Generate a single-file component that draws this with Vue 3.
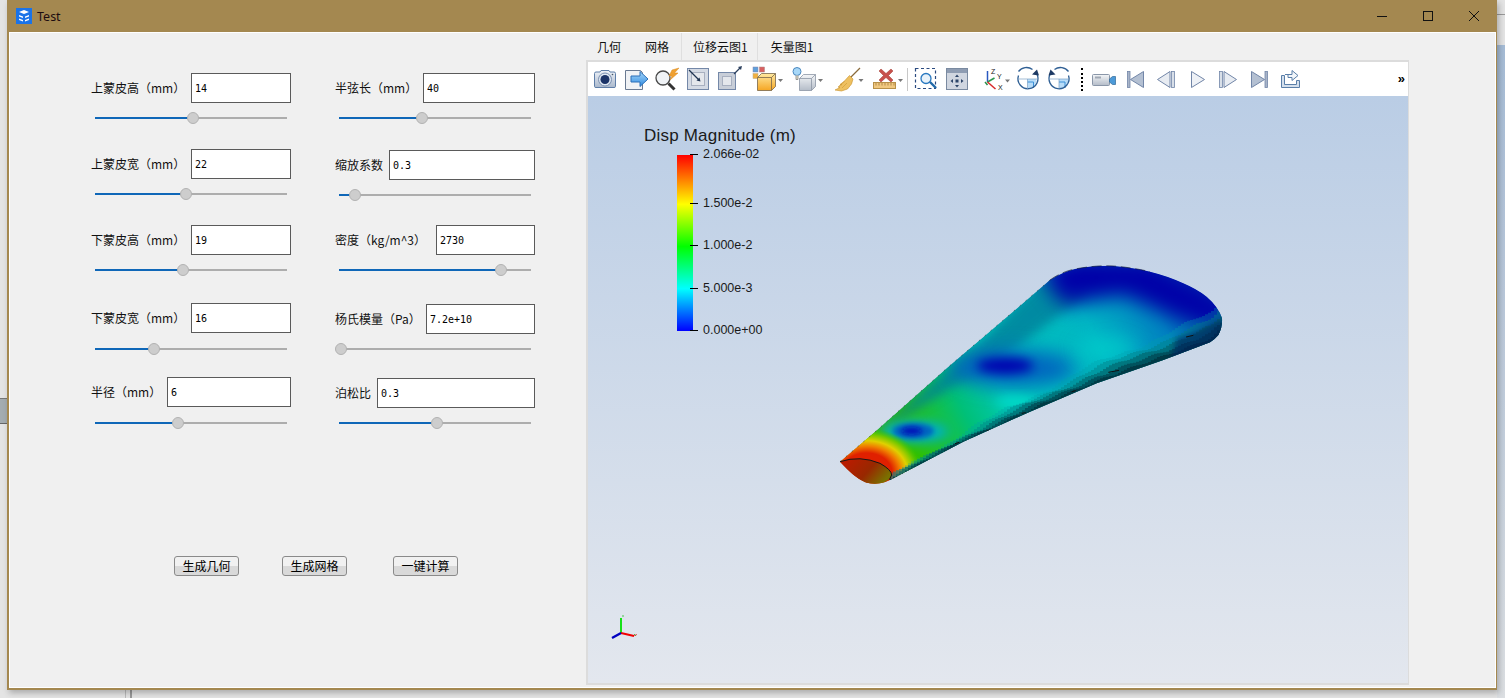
<template>
  <div class="desktop">
    <div class="behind-left"></div>
    <div class="behind-right"></div>
    <div class="behind-line"></div>
    <div class="behind-bottom"></div>
    <div class="window">
      <div class="titlebar">
        <svg class="app-icon" width="16" height="16" viewBox="0 0 16 16">
          <rect width="16" height="16" fill="#1a73e8" />
          <path d="M3 4l5-2 5 2-5 2zM3 7l4 1.500v1.600L3 8.500zM3 10.500l4 1.500v1.600l-4-1.600zM9 8.500l4-1.500v1.500l-4 1.600zM9 12l4-1.500V12l-4 1.600z" fill="#fff" />
        </svg>
        <span class="title-text">Test</span>
        <div class="controls">
          <svg width="12" height="12" viewBox="0 0 12 12"><path d="M1 6.500h10" stroke="#111" fill="none" /></svg>
          <svg width="12" height="12" viewBox="0 0 12 12"><rect x="1.500" y="1.500" width="9" height="9" stroke="#111" fill="none" /></svg>
          <svg width="12" height="12" viewBox="0 0 12 12"><path d="M1 1l10 10M11 1L1 11" stroke="#111" fill="none" /></svg>
        </div>
      </div>

      <div class="client">
        <div class="form">
          <div class="columns">
            <div v-for="(col, c) in columns" :key="c" class="column">
              <div v-for="f in col" :key="f.label" class="field" :style="{ marginTop: f.gap + 'px' }">
                <div class="row">
                  <label>{{ f.label }}</label>
                  <input type="text" :value="f.value" readonly :style="{ width: f.width + 'px' }" />
                </div>
                <div class="slider" :style="{ marginTop: (f.sliderGap || 9) + 'px' }">
                  <div class="track"></div>
                  <div class="fill" :style="{ width: f.pos + 'px' }"></div>
                  <div class="thumb" :style="{ left: f.pos - 6 + 'px' }"></div>
                </div>
              </div>
            </div>
          </div>
          <div class="actions">
            <button class="b1">生成几何</button>
            <button class="b2">生成网格</button>
            <button class="b3">一键计算</button>
          </div>
        </div>

        <div class="right">
          <div class="tabs">
            <span class="tab t1">几何</span>
            <span class="tab t2">网格</span>
            <span class="tab t3">位移云图1</span>
            <span class="tab t4">矢量图1</span>
          </div>
          <div class="viewer">
            <div class="toolbar">
              <svg class="defs" width="0" height="0">
                <defs>
                  <linearGradient id="gBox" x1="0" y1="0" x2="0" y2="1"><stop offset="0" stop-color="#eef2f8" /><stop offset="1" stop-color="#aab8cc" /></linearGradient>
                  <linearGradient id="gBlue" x1="0" y1="0" x2="0" y2="1"><stop offset="0" stop-color="#a8d8fa" /><stop offset="1" stop-color="#2f8ae0" /></linearGradient>
                  <linearGradient id="gOrange" x1="0" y1="0" x2="0" y2="1"><stop offset="0" stop-color="#ffe9a0" /><stop offset="1" stop-color="#f5a623" /></linearGradient>
                  <linearGradient id="gGrey" x1="0" y1="0" x2="0" y2="1"><stop offset="0" stop-color="#f4f6f8" /><stop offset="1" stop-color="#b4bcc8" /></linearGradient>
                </defs>
              </svg>
              <!-- camera -->
              <svg width="31" height="35">
                <path d="M4.500 12.500q0-1.500 1.500-1.500h4l1-1.500h8l1 1.500h4q1.500 0 1.500 1.500v13q0 1-1.500 1H6q-1.500 0-1.500-1z" fill="url(#gBox)" stroke="#5f7ea8" />
                <circle cx="15" cy="18.500" r="6.500" fill="#dfe8f2" stroke="#7a8fb0" />
                <circle cx="15" cy="18.500" r="4.500" fill="#1c3468" />
                <circle cx="22.500" cy="13.500" r="0.800" fill="#456" />
              </svg>
              <!-- save data -->
              <svg width="31" height="35">
                <path d="M4.500 9.500h15l2 2v17h-17z" fill="#f0f2f5" stroke="#6a7a92" />
                <path d="M10 15h9v-4.500l8 7.500-8 7.500V21h-9z" fill="url(#gBlue)" stroke="#2b6fb8" />
              </svg>
              <!-- magnifier with spark -->
              <svg width="30" height="35">
                <circle cx="11" cy="17" r="7" fill="#f0f3f6" stroke="#484848" stroke-width="1.300" />
                <path d="M16.500 22.500l6 6" stroke="#333" stroke-width="3" />
                <path d="M27 7l-7 2-3 6h3l-2 4 8-7h-3.500z" fill="#f0a030" stroke="#d88a20" stroke-width="0.500" />
              </svg>
              <!-- reset box -->
              <svg width="31" height="35">
                <rect x="5.500" y="7.500" width="21" height="21" fill="#d4dae4" stroke="#7488a8" />
                <rect x="9.500" y="11.500" width="13" height="13" fill="#e4e7ec" stroke="#a8b0c0" />
                <path d="M7 9l10 10" stroke="#1e3350" stroke-width="1.200" />
                <path d="M18.500 20.500l-4-1 3-3z" fill="#1e3350" />
              </svg>
              <!-- outward box -->
              <svg width="31" height="35">
                <rect x="5.500" y="11.500" width="17" height="17" fill="#c8ced8" stroke="#7488a8" />
                <rect x="9.500" y="15.500" width="9" height="9" fill="#e4e7ec" stroke="#a8b0c0" />
                <path d="M21 13l6-6" stroke="#2c405e" stroke-width="1.200" />
                <path d="M29 5l-1 4-3-3z" fill="#2c405e" />
              </svg>
              <!-- coloured cube -->
              <svg width="40" height="35">
                <rect x="9" y="6" width="5" height="5" fill="#5fa0dc" stroke="#88a" stroke-width="0.500" />
                <rect x="15.500" y="6" width="5" height="5" fill="#d86060" stroke="#a88" stroke-width="0.500" />
                <rect x="9" y="12.500" width="5" height="5" fill="#f0b040" stroke="#ba8" stroke-width="0.500" />
                <path d="M13.500 16.500l4-4h14v13l-4 4h-14z" fill="url(#gOrange)" stroke="#77664a" stroke-width="0.800" />
                <path d="M13.500 16.500h14v13M27.500 16.500l4-4" fill="none" stroke="#77664a" stroke-width="0.800" />
                <path d="M34 18h5l-2.500 3z" fill="#777" />
              </svg>
              <!-- light and cube -->
              <svg width="40" height="35">
                <circle cx="13" cy="10.500" r="4" fill="#a8d8f8" stroke="#4a88c0" />
                <path d="M12 14.500v4h2v-4" fill="#e8e4d0" stroke="#777" stroke-width="0.700" />
                <path d="M15.500 17.500l4-4h12v12l-4 4h-12z" fill="url(#gGrey)" stroke="#8c96a4" stroke-width="0.800" />
                <path d="M15.500 17.500h12v12M27.500 17.500l4-4" fill="none" stroke="#8c96a4" stroke-width="0.800" />
                <path d="M34 18h5l-2.500 3z" fill="#777" />
              </svg>
              <!-- broom -->
              <svg width="40" height="35">
                <path d="M36 7L26 17" stroke="#8a6a3a" stroke-width="1.300" />
                <path d="M25.500 14.500l3.500 3.500-1.500 5-4 5-6 2-6.500-1 5-2.500-2-.5 4-2.500-2 0 4-3z" fill="#eec060" stroke="#c89028" stroke-width="0.600" />
                <path d="M18 27l5-5M15 25l6-5" stroke="#c89028" stroke-width="0.500" />
                <path d="M34.500 18h5l-2.500 3z" fill="#777" />
              </svg>
              <!-- clear with ruler -->
              <svg width="40" height="35">
                <path d="M17 8l5 4.500L27 8l2 2-4.500 4.500L29 19l-2 2-5-4.500L17 21l-2-2 4.500-4.500L15 10z" fill="#c8504c" stroke="#a03830" stroke-width="0.500" />
                <rect x="9.500" y="21.500" width="22" height="6" fill="#f0c880" stroke="#b89048" />
                <path d="M12 22v2.500M15 22v2.500M18 22v2.500M21 22v2.500M24 22v2.500M27 22v2.500M30 22v2.500" stroke="#9a7030" stroke-width="0.700" />
                <path d="M34 18h5l-2.500 3z" fill="#777" />
              </svg>
              <div class="sep"></div>
              <!-- zoom to box -->
              <svg width="30" height="35">
                <rect x="3.500" y="7.500" width="20" height="20" fill="none" stroke="#2a4a80" stroke-width="1.200" stroke-dasharray="3 2.500" />
                <circle cx="14" cy="17.500" r="5" fill="#e8f2fa" stroke="#2878c0" stroke-width="1.300" />
                <path d="M18 21l6 6" stroke="#2068a8" stroke-width="2.400" />
              </svg>
              <!-- interaction move -->
              <svg width="31" height="35">
                <rect x="4.500" y="7.500" width="21" height="21" fill="#d0d6e0" stroke="#7a8aa0" />
                <rect x="5" y="8" width="20" height="4" fill="#8e9cb2" />
                <path d="M15 13.500l2 2.500h-4zM15 26.500l2-2.500h-4zM8.500 20l2.500-2v4zM21.500 20l-2.500-2v4z" fill="#2c4468" />
                <rect x="13.500" y="18.500" width="3" height="3" fill="#2c4468" />
              </svg>
              <!-- axes -->
              <svg width="40" height="35">
                <path d="M14.500 21V10" stroke="#2a58c0" stroke-width="1.500" />
                <path d="M14.500 21l7-4" stroke="#2c9a50" stroke-width="1.500" />
                <path d="M14.500 21l8 7" stroke="#d82828" stroke-width="1.500" />
                <path d="M12 21l2.500 3" stroke="#28904a" stroke-width="1.500" />
                <text x="18" y="13" class="ax">Z</text>
                <text x="24" y="18" class="ax">Y</text>
                <text x="25" y="29" class="ax">X</text>
                <path d="M32 18.500h5l-2.500 3z" fill="#777" />
              </svg>
              <!-- rotate +90 -->
              <svg width="31" height="35">
                <path d="M14.500 18h9a9.500 9.500 0 0 1-9 10z" fill="#b8dcf8" />
                <path d="M14.500 21h6v6" fill="none" stroke="#3a90d8" stroke-width="1" />
                <path d="M23.500 12.500a10 10 0 1 1-18 2" fill="none" stroke="#2f5f94" stroke-width="1.300" />
                <path d="M5.500 10.500a10 10 0 0 1 14-2" fill="none" stroke="#2f5f94" stroke-width="1.300" />
                <path d="M4.500 18h20M14.500 18v10" stroke="#7da0c4" stroke-width="0.700" />
                <path d="M26 14.500l-7-1 5-5z" fill="#1e3a64" />
              </svg>
              <!-- rotate -90 -->
              <svg width="31" height="35">
                <path d="M15 18h9.500a9.500 9.500 0 0 1-9.500 10z" fill="#b8dcf8" />
                <path d="M15 21h6v6" fill="none" stroke="#3a90d8" stroke-width="1" />
                <path d="M6.500 12.500a10 10 0 1 0 18 2" fill="none" stroke="#2f5f94" stroke-width="1.300" />
                <path d="M24.500 10.500a10 10 0 0 0-14-2" fill="none" stroke="#2f5f94" stroke-width="1.300" />
                <path d="M5 18h20M15 18v10" stroke="#7da0c4" stroke-width="0.700" />
                <path d="M4.500 14.500l7-1-5-5z" fill="#1e3a64" />
              </svg>
              <div class="dots"></div>
              <!-- video -->
              <svg width="31" height="35">
                <rect x="3.500" y="13.500" width="17" height="11" rx="1" fill="url(#gGrey)" stroke="#8a96a8" />
                <rect x="6" y="15.500" width="6" height="2" fill="#a0a8b4" />
                <path d="M20.500 18l3-2.500h3v8h-3l-3-2.500z" fill="#4c9ad8" stroke="#306898" stroke-width="0.700" />
              </svg>
              <!-- first frame -->
              <svg width="31" height="35">
                <rect x="7.500" y="10.500" width="2.500" height="16" fill="#a8b4c8" stroke="#7286a8" stroke-width="0.800" />
                <path d="M23.500 10.500v16L10.500 18.500z" fill="#b4c0d2" stroke="#7286a8" />
              </svg>
              <!-- previous frame -->
              <svg width="31" height="35">
                <path d="M19 10.500v16L6.500 18.500z" fill="#e8ecf2" stroke="#7286a8" />
                <rect x="20.500" y="10.500" width="3" height="16" fill="#d8dfe8" stroke="#7286a8" stroke-width="0.800" />
              </svg>
              <!-- play -->
              <svg width="31" height="35">
                <path d="M9.500 10.500v16l13-8z" fill="#eef1f6" stroke="#7286a8" />
              </svg>
              <!-- next frame -->
              <svg width="31" height="35">
                <rect x="6.500" y="10.500" width="3" height="16" fill="#d8dfe8" stroke="#7286a8" stroke-width="0.800" />
                <path d="M11 10.500v16l12.500-8z" fill="#e8ecf2" stroke="#7286a8" />
              </svg>
              <!-- last frame -->
              <svg width="31" height="35">
                <path d="M7.500 10.500v16l13-8z" fill="#b4c0d2" stroke="#7286a8" />
                <rect x="21" y="10.500" width="2.500" height="16" fill="#a8b4c8" stroke="#7286a8" stroke-width="0.800" />
              </svg>
              <!-- loop -->
              <svg width="31" height="35">
                <path d="M6.500 14.500h3v9h12v-4h3v7h-18z" fill="#d4dfec" stroke="#5a7ea8" />
                <path d="M10 15.500h7v-4l6 5-6 5v-3h-4v-3z" transform="translate(0 -2)" fill="#f2f6fa" stroke="#5a7ea8" />
              </svg>
              <span class="more">»</span>
            </div>

            <div class="canvas">
              <div class="scalar-title">Disp Magnitude (m)</div>
              <div class="scalar-bar"></div>
              <div v-for="t in ticks" :key="t.text" class="tick" :style="{ top: t.y + 'px' }">
                <i></i><span>{{ t.text }}</span>
              </div>

              <svg class="wing" width="400" height="240" viewBox="0 0 1200 720">
                <defs>
                  <linearGradient id="wingBase" gradientUnits="userSpaceOnUse" x1="60" y1="640" x2="1090" y2="110">
                    <stop offset="0" stop-color="#60c800" />
                    <stop offset="0.17" stop-color="#30c000" />
                    <stop offset="0.33" stop-color="#00c078" />
                    <stop offset="0.45" stop-color="#00c8b8" />
                    <stop offset="0.72" stop-color="#00b4c4" />
                    <stop offset="0.89" stop-color="#0080c0" />
                    <stop offset="1" stop-color="#0040b0" />
                  </linearGradient>
                  <radialGradient id="rootHeat" gradientUnits="userSpaceOnUse" cx="110" cy="655" r="170" gradientTransform="translate(110 655) scale(1 .8) translate(-110 -655)">
                    <stop offset="0.45" stop-color="#e02000" />
                    <stop offset="0.6" stop-color="#f08000" />
                    <stop offset="0.72" stop-color="#e0d000" />
                    <stop offset="0.86" stop-color="#70c800" />
                    <stop offset="1" stop-color="#30c000" stop-opacity="0" />
                  </radialGradient>
                  <linearGradient id="capFill" gradientUnits="userSpaceOnUse" x1="60" y1="610" x2="150" y2="690">
                    <stop offset="0" stop-color="#b81c00" />
                    <stop offset="0.55" stop-color="#982800" />
                    <stop offset="1" stop-color="#7a7000" />
                  </linearGradient>
                  <clipPath id="wingClip">
                    <path :d="wingOutline" />
                  </clipPath>
                  <filter id="b6" x="-50%" y="-80%" width="200%" height="260%"><feGaussianBlur stdDeviation="8" /></filter>
                  <filter id="b14" x="-50%" y="-80%" width="200%" height="260%"><feGaussianBlur stdDeviation="16" /></filter>
                  <filter id="b24" x="-50%" y="-80%" width="200%" height="260%"><feGaussianBlur stdDeviation="30" /></filter>
                </defs>
                <g clip-path="url(#wingClip)">
                  <path :d="wingOutline" fill="url(#wingBase)" />
                  <!-- darker leading edge -->
                  <path d="M90 570L440 270L640 70L780 110L570 270L280 450z" fill="#007a98" opacity="0.75" filter="url(#b14)" />
                  <path d="M620 40L740 0L960 10L1210 150L1200 230L1040 185L880 120L700 150z" fill="#0004a8" filter="url(#b24)" />
                  <!-- thin spots -->
                  <ellipse cx="550" cy="340" rx="190" ry="55" fill="#0064c0" filter="url(#b24)" />
                  <ellipse cx="525" cy="332" rx="85" ry="24" fill="#0000b0" filter="url(#b14)" />
                  <ellipse cx="255" cy="530" rx="100" ry="34" fill="#00b0c0" filter="url(#b14)" />
                  <ellipse cx="250" cy="528" rx="62" ry="24" fill="#0064c0" filter="url(#b6)" />
                  <ellipse cx="245" cy="528" rx="32" ry="11" fill="#0010b8" filter="url(#b6)" />
                  <ellipse cx="555" cy="440" rx="60" ry="14" fill="#00e0cc" filter="url(#b14)" />
                  <ellipse cx="830" cy="280" rx="90" ry="34" fill="#00d0cc" filter="url(#b24)" opacity="0.8" />
                  <!-- heat around the root -->
                  <rect x="0" y="470" width="330" height="250" fill="url(#rootHeat)" />
                  <!-- stepped shading on the trailing side -->
                  <path :d="band(1)" fill="#00a0a8" opacity="0.3" />
                  <path :d="band(0.78)" fill="#008088" opacity="0.45" />
                  <path :d="band(0.56)" fill="#006068" opacity="0.6" />
                  <path :d="band(0.34)" fill="#004450" opacity="0.7" />
                  <path :d="band(0.16)" fill="#00303c" opacity="0.7" />
                  <path d="M1040 250L1110 225L1180 190V280L1020 320z" fill="#001a60" opacity="0.55" filter="url(#b6)" />
                  <path d="M375 566l12-4M470 528l8-3M575 475l12-2M725 410l12-3M835 352l32-6M1068 246l22-5" stroke="#111" stroke-width="3" fill="none" />
                </g>
                <path d="M30 620Q90 600 150 625Q185 645 185 660Q178 680 150 685Q125 688 105 682Q70 665 30 620Z" fill="url(#capFill)" />
                <path d="M30 620Q90 600 150 625Q185 645 185 660L178 674" fill="none" stroke="#161616" stroke-width="3" />
                <path d="M30 620L130 535L350 340L520 195L660 75" fill="none" stroke="#1a2a30" stroke-width="1.500" stroke-dasharray="5 18" />
                <path d="M660 75Q695 50 735 42Q800 30 850 33Q910 38 960 50" fill="none" stroke="#101838" stroke-width="2" stroke-dasharray="30 14" />
              </svg>

              <svg class="triad" width="32" height="30" viewBox="0 0 32 30">
                <path d="M14 18V3" stroke="#00e000" stroke-width="1.800" />
                <path d="M14 18l13 3" stroke="#f00000" stroke-width="1.800" />
                <path d="M14 18l-9 5" stroke="#0000c0" stroke-width="2.400" />
                <path d="M15 1h2M27 19l2 2" stroke="#20c020" stroke-width="0.800" />
                <path d="M27 20.500l3-1" stroke="#e03030" stroke-width="0.800" />
              </svg>
            </div>
          </div>
        </div>
      </div>
    </div>
  </div>
</template>

<script setup>
const columns = [
  [
    { label: '上蒙皮高（mm）', value: '14', width: 100, pos: 98, gap: 0 },
    { label: '上蒙皮宽（mm）', value: '22', width: 100, pos: 91, gap: 25 },
    { label: '下蒙皮高（mm）', value: '19', width: 100, pos: 88, gap: 25 },
    { label: '下蒙皮宽（mm）', value: '16', width: 100, pos: 59, gap: 27, sliderGap: 10 },
    { label: '半径（mm）', value: '6', width: 124, pos: 83, gap: 22, sliderGap: 10 }
  ],
  [
    { label: '半弦长（mm）', value: '40', width: 112, pos: 83, gap: 0 },
    { label: '缩放系数', value: '0.3', width: 146, pos: 16, gap: 26 },
    { label: '密度（kg/m^3）', value: '2730', width: 99, pos: 162, gap: 24 },
    { label: '杨氏模量（Pa）', value: '7.2e+10', width: 109, pos: 2, gap: 28 },
    { label: '泊松比', value: '0.3', width: 158, pos: 98, gap: 23 }
  ]
]

// y is relative to the 3D canvas
const ticks = [
  { text: '2.066e-02', y: 51 },
  { text: '1.500e-2', y: 100 },
  { text: '1.000e-2', y: 142 },
  { text: '5.000e-3', y: 185 },
  { text: '0.000e+00', y: 227 }
]

const wingOutline =
  'M30 620L130 535L350 340L520 195L660 75Q695 52 735 42Q800 30 850 33Q910 38 960 50Q1020 65 1060 85Q1100 102 1130 125Q1165 155 1176 190Q1178 215 1165 240Q1155 252 1140 262L1000 315L800 385L600 470L400 560L180 675Q165 683 150 685Q130 688 110 683Q80 670 60 650Z'

const edge = [
  [180, 675], [400, 560], [600, 470], [800, 385], [1000, 315], [1140, 262], [1180, 225]
]

function edgeY(x) {
  for (let i = 1; i < edge.length; i++) {
    if (x <= edge[i][0]) {
      const [x0, y0] = edge[i - 1]
      const [x1, y1] = edge[i]
      return y0 + ((y1 - y0) * (x - x0)) / (x1 - x0)
    }
  }
  return edge[edge.length - 1][1]
}

// jagged band along the lower edge, like the coarse mesh facets
function band(k) {
  let d = 'M180 690'
  for (let x = 180; x <= 1180; x += 9) {
    const t = (x - 180) / 1000
    const h = (14 + 76 * t) * k + Math.sin(x * 0.07 + k * 9) * 3 + Math.sin(x * 0.021 + k * 4) * 7 * k
    d += `L${x} ${Math.round(edgeY(x) - Math.max(h, 2))}h9`
  }
  return d + 'V720H180Z'
}
</script>

<style>
html,
body {
  margin: 0;
  overflow: hidden;
  background: #e6e6e6;
}
</style>

<style scoped>
* {
  box-sizing: border-box;
}

.desktop {
  position: relative;
  width: 1505px;
  height: 698px;
  overflow: hidden;
  background: #e4e4e4;
  font-family: "Noto Sans CJK SC", "Liberation Sans", sans-serif;
  font-size: 12px;
  color: #111;
}

.behind-left {
  position: absolute;
  left: 0;
  top: 398px;
  width: 7px;
  height: 26px;
  background: #a4acb0;
  border-top: 1px solid #777;
  border-bottom: 1px solid #666;
}

.behind-right {
  position: absolute;
  right: 0;
  top: 45px;
  width: 8px;
  height: 653px;
  background: linear-gradient(#a6bcd6, #c4cfdc 60%, #dcdfe2);
}

.behind-line {
  position: absolute;
  right: 0;
  top: 14px;
  width: 8px;
  height: 1px;
  background: #9a9a9a;
}

.behind-bottom {
  position: absolute;
  left: 125px;
  top: 690px;
  width: 7px;
  height: 8px;
  border-left: 1px solid #bbb;
  border-right: 2px solid #999;
}

/* WINDOW */
.window {
  position: absolute;
  left: 7px;
  top: 0;
  width: 1490px;
  height: 690px;
  background: #a48850;
  padding: 0 1px 2px 2px;
  box-shadow: 2px 3px 6px rgba(0, 0, 0, 0.25);
  display: flex;
  flex-direction: column;
}

.titlebar {
  height: 32px;
  display: flex;
  align-items: center;
  padding-left: 9px;
  margin-left: -2px;
  flex: none;
}

.app-icon {
  flex: none;
}

.title-text {
  margin-left: 5px;
  font-family: "Noto Sans", sans-serif;
  font-size: 12.5px;
  color: #1c0c10;
}

.controls {
  margin-left: auto;
  display: flex;
  gap: 34px;
  padding-right: 16px;
}

.client {
  flex: 1;
  display: flex;
  background: #f0f0f0;
  border: 1px solid #fff;
  min-height: 0;
}

/* FORM */
.form {
  width: 576px;
  flex: none;
  padding: 40px 0 0 81px;
}

.columns {
  display: flex;
  gap: 44px;
}

.column {
  width: 200px;
}

.row {
  display: flex;
  justify-content: space-between;
  align-items: center;
  height: 30px;
}

.row label {
  white-space: nowrap;
  line-height: 30px;
}

.row input {
  height: 30px;
  border: 1px solid #5a5a5a;
  background: #fff;
  padding: 0 3px;
  outline: none;
  font-family: "DejaVu Sans Mono", monospace;
  font-size: 10px;
  color: #000;
}

.slider {
  position: relative;
  width: 192px;
  height: 12px;
  margin-left: 4px;
}

.track,
.fill {
  position: absolute;
  left: 0;
  top: 5px;
  height: 2px;
}

.track {
  width: 100%;
  background: #adadad;
}

.fill {
  background: #0f67b8;
}

.thumb {
  position: absolute;
  top: 0;
  width: 12px;
  height: 12px;
  border-radius: 50%;
  background: #cdcdcd;
  border: 1px solid #b2b2b2;
}

.actions {
  margin: 127px 0 0 83px;
  display: flex;
}

.actions button {
  width: 65px;
  height: 20px;
  padding: 0;
  border: 1px solid #8a8a8a;
  border-radius: 3px;
  background: linear-gradient(#f1f1f1 50%, #d9d9d9 50%);
  font-family: "Noto Sans CJK SC", sans-serif;
  font-size: 12px;
  line-height: 18px;
  color: #000;
}

.actions .b2 {
  margin-left: 43px;
}

.actions .b3 {
  margin-left: 46px;
}

/* RIGHT SIDE */
.right {
  width: 823px;
  flex: none;
  display: flex;
  flex-direction: column;
}

.tabs {
  height: 27px;
  display: flex;
  flex: none;
}

.tab {
  line-height: 28px;
  white-space: nowrap;
}

.t1 {
  margin-left: 11px;
}

.t2 {
  margin-left: 24px;
  padding-right: 12px;
  border-right: 1px solid #dfdfdf;
}

.t3 {
  padding: 0 9px 0 11px;
  border-right: 1px solid #dfdfdf;
}

.t4 {
  margin-left: 13px;
}

.viewer {
  height: 625px;
  border: 2px solid #dcdcdc;
  border-right-width: 1px;
  display: flex;
  flex-direction: column;
}

.toolbar {
  height: 34px;
  flex: none;
  background: #fff;
  display: flex;
  align-items: stretch;
  padding-left: 2px;
  position: relative;
}

.toolbar > svg {
  flex: none;
  margin-top: -1px;
}

.toolbar > svg.defs {
  position: absolute;
  margin: 0;
}

.ax {
  font-family: "Liberation Sans", sans-serif;
  font-size: 7px;
  fill: #222;
}

.sep {
  width: 8px;
  flex: none;
  position: relative;
}

.sep::after {
  content: "";
  position: absolute;
  left: 3px;
  top: 6px;
  height: 23px;
  width: 1px;
  background: #c8c8c8;
}

.dots {
  width: 14px;
  flex: none;
  position: relative;
}

.dots::after {
  content: "";
  position: absolute;
  left: 6px;
  top: 6px;
  height: 23px;
  border-left: 2px dotted #000;
}

.more {
  margin-left: auto;
  padding-right: 3px;
  font-family: "Liberation Sans", sans-serif;
  font-size: 13px;
  font-weight: 700;
  line-height: 34px;
  color: #000;
}

/* 3D VIEW */
.canvas {
  flex: 1;
  position: relative;
  overflow: hidden;
  background: linear-gradient(#bacde5, #e3e7ee);
  font-family: "Liberation Sans", sans-serif;
  color: #1a1a1a;
}

.scalar-title {
  position: absolute;
  left: 56px;
  top: 30px;
  font-size: 17px;
  letter-spacing: 0.2px;
  line-height: 20px;
  white-space: nowrap;
}

.scalar-bar {
  position: absolute;
  left: 89px;
  top: 59px;
  width: 16px;
  height: 176px;
  background: linear-gradient(#ff0000, #ffff00 28%, #00ff00 52%, #00ffff 76%, #0000ff);
}

.tick {
  position: absolute;
  left: 102px;
  display: flex;
  align-items: center;
  height: 14px;
  font-size: 12.5px;
  white-space: nowrap;
}

.tick i {
  display: block;
  width: 8px;
  height: 1px;
  background: #000;
  margin-right: 5px;
}

.wing {
  position: absolute;
  left: 242px;
  top: 159px;
}

.triad {
  position: absolute;
  left: 19px;
  top: 519px;
}
</style>
